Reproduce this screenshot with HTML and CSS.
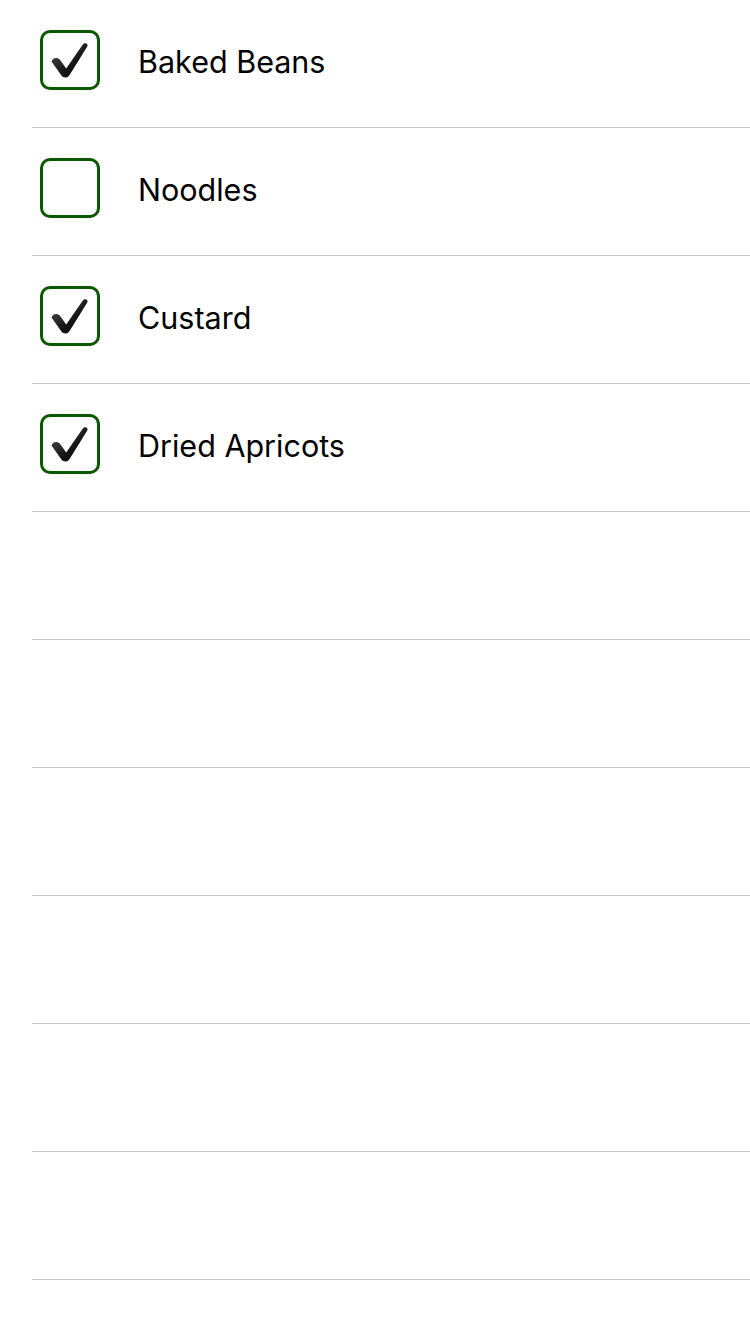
FILE: index.html
```html
<!DOCTYPE html>
<html>
<head>
<meta charset="utf-8">
<link rel="stylesheet" href="styles.css">
</head>
<body>
<svg width="0" height="0" class="defs">
  <defs>
    <linearGradient id="chk" x1="0" y1="0" x2="1" y2="1">
      <stop offset="0" stop-color="#555"/>
      <stop offset="0.6" stop-color="#151515"/>
      <stop offset="1" stop-color="#000"/>
    </linearGradient>
    <symbol id="tick" viewBox="0 0 60 60">
      <path d="M11.5 31.5 C12.5 27.5 17.5 26.8 20 29.8 L26.2 38.5 L42.8 14.6 C44.6 12.2 48.6 13.4 47.3 16.6 L29.4 45.2 C27.6 48.2 23.4 48.4 21.4 45.6 Z" fill="url(#chk)"/>
    </symbol>
  </defs>
</svg>
<ul class="list">
  <li class="row"><div class="cell"><span class="box"><svg class="tick" viewBox="0 0 60 60"><use href="#tick"/></svg></span><span class="label">Baked Beans</span></div></li>
  <li class="row"><div class="cell"><span class="box"></span><span class="label">Noodles</span></div></li>
  <li class="row"><div class="cell"><span class="box"><svg class="tick" viewBox="0 0 60 60"><use href="#tick"/></svg></span><span class="label">Custard</span></div></li>
  <li class="row"><div class="cell"><span class="box"><svg class="tick" viewBox="0 0 60 60"><use href="#tick"/></svg></span><span class="label">Dried Apricots</span></div></li>
  <li class="row"><div class="cell"></div></li>
  <li class="row"><div class="cell"></div></li>
  <li class="row"><div class="cell"></div></li>
  <li class="row"><div class="cell"></div></li>
  <li class="row"><div class="cell"></div></li>
  <li class="row"><div class="cell"></div></li>
</ul>
</body>
</html>
```
FILE: styles.css
```css
html, body {
  margin: 0;
  padding: 0;
  background: #fff;
  width: 750px;
  height: 1334px;
  overflow: hidden;
}
.defs {
  position: absolute;
  width: 0;
  height: 0;
}
.list {
  list-style: none;
  margin: 0;
  padding: 0;
}
.row {
  padding-left: 32px;
}
.cell {
  height: 127px;
  border-bottom: 1px solid #c8c7cc;
  box-sizing: content-box;
  display: flex;
  align-items: flex-start;
  padding-left: 8px;
}
.box {
  margin-top: 30px;
  width: 60px;
  height: 60px;
  box-sizing: border-box;
  border: 3px solid #0b5600;
  border-radius: 10px;
  flex: none;
  position: relative;
}
.tick {
  position: absolute;
  left: -3px;
  top: -3px;
  width: 60px;
  height: 60px;
}
.label {
  margin-top: 32px;
  margin-left: 38px;
  line-height: 60px;
  font-family: Inter, "Noto Sans", sans-serif;
  font-size: 30.5px;
  color: #000;
}
```
